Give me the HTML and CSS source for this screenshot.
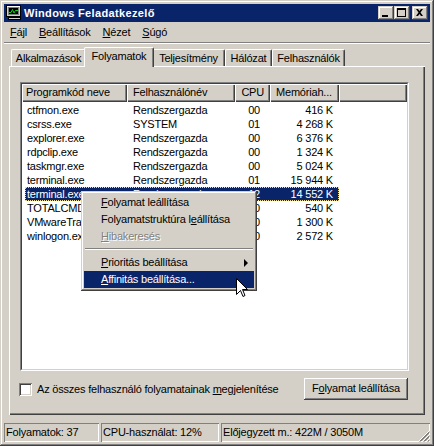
FILE: index.html
```html
<!DOCTYPE html>
<html lang="hu">
<head>
<meta charset="utf-8">
<title>Windows Feladatkezelő</title>
<link rel="stylesheet" href="styles.css">
</head>
<body>
<div class="window">
  <div class="titlebar">
    <svg class="app-icon" viewBox="0 0 16 16" width="16" height="16">
      <rect x="0.5" y="0.5" width="14" height="11" fill="#d4d0c8" stroke="#000" shape-rendering="crispEdges"/>
      <rect x="1" y="1" width="13" height="1" fill="#fff" shape-rendering="crispEdges"/>
      <rect x="2.5" y="2.5" width="10" height="7" fill="#000" stroke="#808080" shape-rendering="crispEdges"/>
      <polyline points="3,7.5 5,7.5 6.5,4.5 8,8 9.5,5.5 12,5.5" fill="none" stroke="#00e000" stroke-width="1"/>
      <rect x="2.5" y="12.5" width="12" height="2" fill="#d4d0c8" stroke="#000" shape-rendering="crispEdges"/>
    </svg>
    <span class="title">Windows Feladatkezelő</span>
    <div class="caption-buttons">
      <span class="cap-btn"><svg viewBox="0 0 16 14" width="16" height="14"><rect x="4" y="9" width="6" height="2" fill="#000"/></svg></span>
      <span class="cap-btn"><svg viewBox="0 0 16 14" width="16" height="14"><path d="M3 2h9v9H3z M4 4h7v6H4z" fill="#000" fill-rule="evenodd"/></svg></span>
      <span class="cap-btn cap-close"><svg viewBox="0 0 16 14" width="16" height="14"><path d="M4 3h2l1.5 2 1.5-2h2l-2.5 3.5 2.5 3.5h-2l-1.5-2-1.5 2h-2l2.5-3.5z" fill="#000"/></svg></span>
    </div>
  </div>

  <div class="menubar">
    <span class="menu-item"><u>F</u>ájl</span>
    <span class="menu-item"><u>B</u>eállítások</span>
    <span class="menu-item"><u>N</u>ézet</span>
    <span class="menu-item"><u>S</u>úgó</span>
  </div>
  <div class="menu-sep"></div>

  <div class="content">
    <div class="tabs">
      <div class="tab tab-apps">Alkalmazások</div>
      <div class="tab tab-proc selected">Folyamatok</div>
      <div class="tab tab-perf">Teljesítmény</div>
      <div class="tab tab-net">Hálózat</div>
      <div class="tab tab-users">Felhasználók</div>
    </div>
    <div class="panel">
      <div class="listview">
        <div class="lv-inner">
          <div class="lv-header">
            <div class="hcell c-name">Programkód neve</div>
            <div class="hcell c-user">Felhasználónév</div>
            <div class="hcell c-cpu">CPU</div>
            <div class="hcell c-mem">Memóriah...</div>
            <div class="hcell c-fill"></div>
          </div>
          <div class="lv-rows">
            <div class="row"><span class="cell c-name">ctfmon.exe</span><span class="cell c-user">Rendszergazda</span><span class="cell c-cpu">00</span><span class="cell c-mem">416 K</span></div>
            <div class="row"><span class="cell c-name">csrss.exe</span><span class="cell c-user">SYSTEM</span><span class="cell c-cpu">01</span><span class="cell c-mem">4 268 K</span></div>
            <div class="row"><span class="cell c-name">explorer.exe</span><span class="cell c-user">Rendszergazda</span><span class="cell c-cpu">00</span><span class="cell c-mem">6 376 K</span></div>
            <div class="row"><span class="cell c-name">rdpclip.exe</span><span class="cell c-user">Rendszergazda</span><span class="cell c-cpu">00</span><span class="cell c-mem">1 324 K</span></div>
            <div class="row"><span class="cell c-name">taskmgr.exe</span><span class="cell c-user">Rendszergazda</span><span class="cell c-cpu">00</span><span class="cell c-mem">5 024 K</span></div>
            <div class="row"><span class="cell c-name">terminal.exe</span><span class="cell c-user">Rendszergazda</span><span class="cell c-cpu">01</span><span class="cell c-mem">15 944 K</span></div>
            <div class="row selected"><span class="cell c-name">terminal.exe</span><span class="cell c-user">Rendszergazda</span><span class="cell c-cpu">12</span><span class="cell c-mem">14 552 K</span></div>
            <div class="row"><span class="cell c-name">TOTALCMD.EXE</span><span class="cell c-user">Rendszergazda</span><span class="cell c-cpu">00</span><span class="cell c-mem">540 K</span></div>
            <div class="row"><span class="cell c-name">VMwareTray.exe</span><span class="cell c-user">Rendszergazda</span><span class="cell c-cpu">00</span><span class="cell c-mem">1 300 K</span></div>
            <div class="row"><span class="cell c-name">winlogon.exe</span><span class="cell c-user">SYSTEM</span><span class="cell c-cpu">00</span><span class="cell c-mem">2 572 K</span></div>
          </div>
        </div>
      </div>
      <div class="footer">
        <label class="check"><span class="checkbox"></span><span>Az összes felhasználó folyamatainak <u>m</u>egjelenítése</span></label>
        <span class="btn">F<u>o</u>lyamat leállítása</span>
      </div>
    </div>
  </div>

  <div class="statusbar">
    <div class="sb-panel sb-procs">Folyamatok: 37</div>
    <div class="sb-panel sb-cpu">CPU-használat: 12%</div>
    <div class="sb-panel sb-mem">Előjegyzett m.: 422M / 3050M
      <svg class="grip" viewBox="0 0 12 12" width="12" height="12">
        <path d="M11.5 0.5L0.5 11.5 M11.5 4.5L4.5 11.5 M11.5 8.5L8.5 11.5" stroke="#fff"/>
        <path d="M11.5 1.5L1.5 11.5 M11.5 2.5L2.5 11.5 M11.5 5.5L5.5 11.5 M11.5 6.5L6.5 11.5 M11.5 9.5L9.5 11.5 M11.5 10.5L10.5 11.5" stroke="#808080"/>
      </svg>
    </div>
  </div>

  <div class="ctx-menu">
    <div class="ctx-item"><u>F</u>olyamat leállítása</div>
    <div class="ctx-item">Folyamatstruktúra l<u>e</u>állítása</div>
    <div class="ctx-item disabled"><u>H</u>ibakeresés</div>
    <div class="ctx-sep"></div>
    <div class="ctx-item has-sub"><u>P</u>rioritás beállítása</div>
    <div class="ctx-item active"><u>A</u>ffinitás beállítása...</div>
  </div>

  <svg class="cursor" viewBox="0 0 12 20" width="12" height="20">
    <path d="M0.5 0.5V16.5L4.5 12.5L7 18.5L9 17.5L6.5 11.5H11.5Z" fill="#fff" stroke="#000"/>
  </svg>
</div>
</body>
</html>
```

FILE: styles.css
```css
* { box-sizing: border-box; }
html, body { margin: 0; padding: 0; }
body {
  width: 434px;
  height: 446px;
  overflow: hidden;
  background: #d4d0c8;
  font-family: "Liberation Sans", Arial, sans-serif;
  font-size: 11px;
  letter-spacing: -0.2px;
  color: #000;
}
u { text-decoration: underline; text-underline-offset: 1px; }

.window {
  position: relative;
  width: 434px;
  height: 446px;
  padding: 4px;
  display: flex;
  flex-direction: column;
  background: #d4d0c8;
  box-shadow: inset -1px -1px #404040, inset 1px 1px #d4d0c8, inset -2px -2px #808080, inset 2px 2px #fff;
}

/* title bar */
.titlebar {
  flex: none;
  height: 18px;
  display: flex;
  align-items: center;
  padding: 0 2px;
  background: #0a246a;
  color: #fff;
}
.app-icon { flex: none; margin-right: 2px; }
.title {
  flex: 1;
  font-weight: bold;
  font-size: 11px;
  letter-spacing: 0.35px;
  white-space: nowrap;
}
.caption-buttons { display: flex; }
.cap-btn {
  display: block;
  width: 16px;
  height: 14px;
  background: #d4d0c8;
  box-shadow: inset -1px -1px #404040, inset 1px 1px #d4d0c8, inset -2px -2px #808080, inset 2px 2px #fff;
}
.cap-btn svg { display: block; }
.cap-close { margin-left: 2px; }

/* menu */
.menubar {
  flex: none;
  height: 20px;
  display: flex;
  align-items: center;
}
.menu-item { padding: 0 6px; line-height: 17px; }
.menu-sep {
  flex: none;
  border-top: 1px solid #808080;
  border-bottom: 1px solid #fff;
}

/* tabs */
.content {
  flex: none;
  padding: 3px 5px 0;
  display: flex;
  flex-direction: column;
}
.tabs {
  height: 19px;
  display: flex;
  align-items: flex-end;
  padding-left: 2px;
  position: relative;
  z-index: 1;
}
.tab {
  height: 17px;
  line-height: 16px;
  text-align: center;
  white-space: nowrap;
  background: #d4d0c8;
  border-top: 1px solid #fff;
  border-left: 1px solid #fff;
  border-right: 1px solid #404040;
  border-radius: 2px 2px 0 0;
  box-shadow: inset -1px 0 #808080;
}
.tab-apps { width: 75px; }
.tab-proc { width: 66px; }
.tab-perf { width: 73px; }
.tab-net { width: 47px; }
.tab-users { width: 73px; }
.tab.selected {
  position: relative;
  z-index: 2;
  width: 70px;
  height: 20px;
  margin: 0 -2px -1px;
  padding-bottom: 3px;
}

/* panel */
.panel {
  height: 349px;
  padding: 16px 16px 15px 11px;
  display: flex;
  flex-direction: column;
  background: #d4d0c8;
  box-shadow: inset 1px 1px #fff, inset -1px -1px #404040, inset -2px -2px #808080;
}

/* list view */
.listview {
  height: 289px;
  border: 1px solid;
  border-color: #808080 #fff #fff #808080;
}
.lv-inner {
  height: 100%;
  border: 1px solid;
  border-color: #404040 #d4d0c8 #d4d0c8 #404040;
  background: #fff;
  overflow: hidden;
}
.lv-header {
  display: flex;
  height: 18px;
}
.hcell {
  height: 18px;
  line-height: 17px;
  padding: 0 6px;
  white-space: nowrap;
  overflow: hidden;
  background: #d4d0c8;
  box-shadow: inset 1px 1px #fff, inset -1px -1px #404040, inset -2px -2px #808080;
}
.hcell.c-name { width: 105px; padding-left: 4px; }
.hcell.c-user { width: 108px; }
.hcell.c-cpu { width: 35px; text-align: right; }
.hcell.c-mem { width: 69px; }
.hcell.c-fill { flex: 1; }

.lv-rows { padding: 1px 0 0 3px; }
.row {
  display: flex;
  width: 314px;
  height: 14px;
  line-height: 14px;
  white-space: nowrap;
}
.cell { display: block; overflow: hidden; }
.cell.c-name { width: 102px; padding-left: 2px; }
.cell.c-user { width: 108px; padding-left: 6px; }
.cell.c-cpu { width: 35px; text-align: right; padding-right: 10px; }
.cell.c-mem { width: 69px; text-align: right; padding-right: 6px; }
.row.selected {
  background: #0a246a;
  color: #fff;
  outline: 1px dotted #f5db95;
  outline-offset: -1px;
}

/* footer */
.footer {
  height: 22px;
  margin-top: 7px;
  display: flex;
  align-items: center;
  justify-content: space-between;
}
.check { display: flex; align-items: center; margin-left: -1px; }
.checkbox {
  width: 13px;
  height: 13px;
  margin-right: 5px;
  background: #fff;
  box-shadow: inset 1px 1px #808080, inset -1px -1px #fff, inset 2px 2px #404040, inset -2px -2px #d4d0c8;
}
.btn {
  width: 104px;
  height: 22px;
  line-height: 21px;
  margin-right: 1px;
  text-align: center;
  background: #d4d0c8;
  box-shadow: inset -1px -1px #404040, inset 1px 1px #fff, inset -2px -2px #808080;
}

/* status bar */
.statusbar {
  flex: none;
  height: 19px;
  margin-top: 8px;
  display: flex;
  gap: 2px;
}
.sb-panel {
  position: relative;
  line-height: 19px;
  padding-left: 2px;
  white-space: nowrap;
  box-shadow: inset 1px 1px #808080, inset -1px -1px #fff;
}
.sb-procs { width: 95px; }
.sb-cpu { width: 118px; }
.sb-mem { flex: 1; }
.grip { position: absolute; right: 0; bottom: 0; display: block; }

/* context menu */
.ctx-menu {
  position: absolute;
  left: 81px;
  top: 191px;
  width: 176px;
  padding: 3px;
  background: #d4d0c8;
  box-shadow: inset -1px -1px #404040, inset 1px 1px #d4d0c8, inset -2px -2px #808080, inset 2px 2px #fff;
  z-index: 5;
}
.ctx-item {
  position: relative;
  height: 17px;
  line-height: 17px;
  padding-left: 17px;
  white-space: nowrap;
}
.ctx-item.disabled { color: #808080; text-shadow: 1px 1px #fff; }
.ctx-item.active { background: #0a246a; color: #fff; }
.ctx-item.has-sub::after {
  content: "";
  position: absolute;
  right: 6px;
  top: 5px;
  border-left: 4px solid #000;
  border-top: 4px solid transparent;
  border-bottom: 4px solid transparent;
}
.ctx-sep { height: 9px; padding: 3px 1px 0; }
.ctx-sep::before {
  content: "";
  display: block;
  border-top: 1px solid #808080;
  border-bottom: 1px solid #fff;
}

.cursor {
  position: absolute;
  left: 236px;
  top: 278px;
  z-index: 6;
}
```
